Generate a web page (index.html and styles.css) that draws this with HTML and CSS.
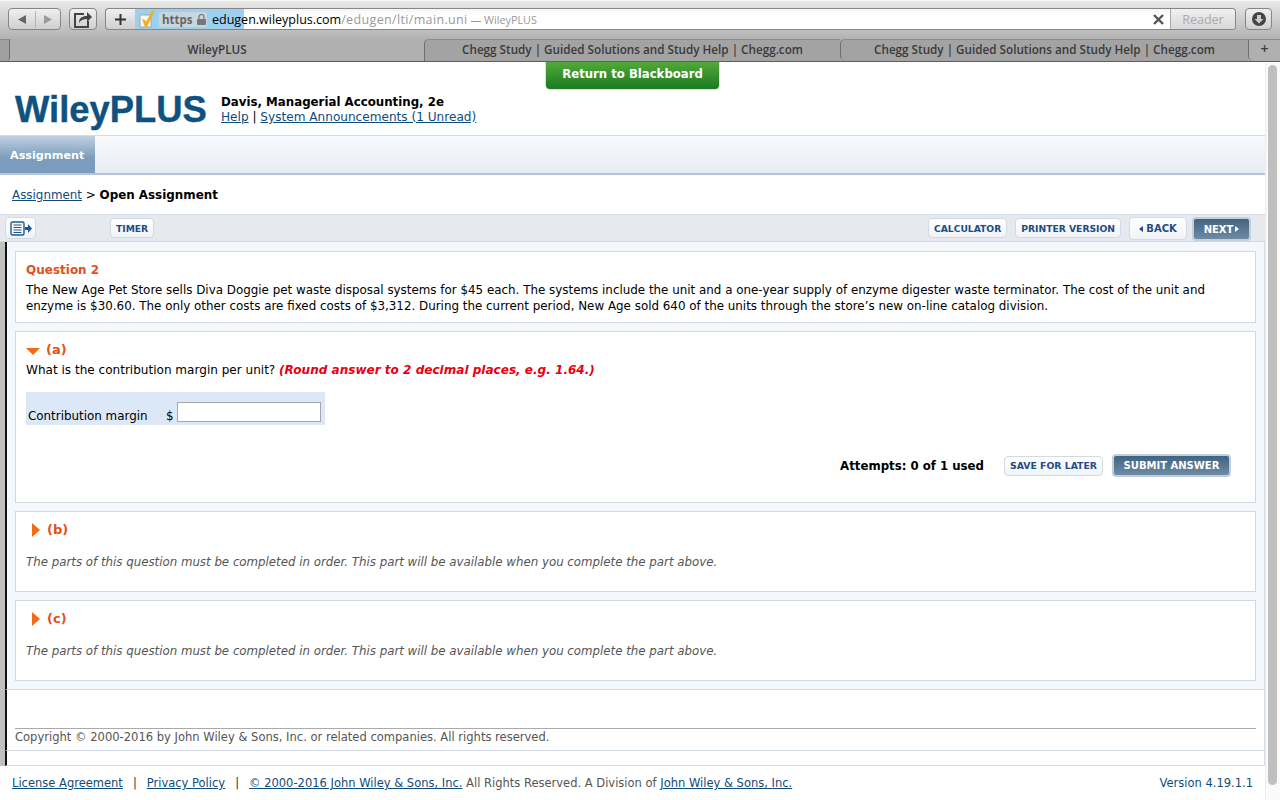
FILE: index.html
```html
<!DOCTYPE html>
<html lang="en">
<head>
  <meta charset="UTF-8">
  <title>WileyPLUS</title>
  <link rel="stylesheet" href="styles.css">
</head>
<body>
  <!-- Browser window chrome -->
  <div class="toolbar">
    <div class="tool-btn nav-btns">
      <svg width="51" height="19" viewBox="0 0 51 19"><path d="M17 5v9l-8-4.500z" fill="#666"/><path d="M26.500 1v17" stroke="#b4b4b4"/><path d="M35 5v9l8-4.500z" fill="#9a9a9a"/></svg>
    </div>
    <div class="tool-btn share-btn">
      <svg width="20" height="19" viewBox="0 0 20 19"><path d="M11 4H2v13h13v-6" fill="none" stroke="#444" stroke-width="2"/><path d="M6 13c0-5 3-7 8-7V2l5 5-5 5V9c-4 0-6 1-8 4z" fill="#444"/></svg>
    </div>
    <div class="tool-btn plus-btn">
      <svg width="13" height="13" viewBox="0 0 13 13"><path d="M6.500 1v11M1 6.500h11" stroke="#333" stroke-width="2"/></svg>
    </div>
    <div class="address">
      <svg class="favicon" width="16" height="18" viewBox="0 0 16 18"><path d="M1 5h11v12H1z" fill="#f6f6f0" stroke="#a8a8a0"/><path d="M3 9l3 1 1 2 6-11 3-1-8 17H6z" fill="#f6ad1c"/></svg>
      <span class="https">https
        <svg width="9" height="11" viewBox="0 0 9 11"><path d="M2 5V3a2.500 2.500 0 0 1 5 0v2" fill="none" stroke="#777" stroke-width="1.200"/><rect y="5" width="9" height="6" rx="1" fill="#777"/></svg>
      </span>
      <span class="url"><span class="host">edugen.wileyplus.com</span><span class="path">/edugen/lti/main.uni</span><span class="page-name"> — WileyPLUS</span></span>
      <span class="progress"></span>
      <svg class="stop" width="11" height="11" viewBox="0 0 11 11"><path d="M1 1l9 9M10 1l-9 9" stroke="#555" stroke-width="2.400"/></svg>
      <span class="reader">Reader</span>
    </div>
    <div class="tool-btn dl-btn">
      <svg width="14" height="14" viewBox="0 0 14 14"><circle cx="7" cy="7" r="7" fill="#444"/><path d="M5 3h4v4h2.500L7 11.500 2.500 7H5z" fill="#ccc"/></svg>
    </div>
  </div>
  <div class="tabs">
    <div class="tab-edge"></div>
    <div class="tab-active">WileyPLUS</div>
    <div class="tab tab-wide">Chegg Study | Guided Solutions and Study Help | Chegg.com</div>
    <div class="tab">Chegg Study | Guided Solutions and Study Help | Chegg.com</div>
    <div class="tab-add">+</div>
  </div>

  <div class="window">
    <div class="page">
      <a class="return-btn">Return to Blackboard</a>

      <div class="header">
        <div class="logo">WileyPLUS</div>
        <div class="course">
          <div class="course-title">Davis, Managerial Accounting, 2e</div>
          <div class="course-links"><a>Help</a> | <a>System Announcements (1 Unread)</a></div>
        </div>
      </div>

      <div class="nav"><div class="nav-tab">Assignment</div></div>

      <div class="crumbs"><a>Assignment</a> &gt; <b>Open Assignment</b></div>

      <div class="actions">
        <div class="btn icon-btn">
          <svg width="23" height="15" viewBox="0 0 23 15"><rect x="1" y="1" width="13" height="13" rx="1.500" fill="none" stroke="#1f5a8c" stroke-width="1.400"/><path d="M3.500 4h8M3.500 6.500h8M3.500 9h8M3.500 11.500h8" stroke="#1f5a8c"/><path d="M15 6h3V3l4 4.500-4 4.500V9h-3z" fill="#1f5a8c"/></svg>
        </div>
        <div class="btn timer">TIMER</div>
        <div class="spacer"></div>
        <div class="btn btn-small">CALCULATOR</div>
        <div class="btn btn-small">PRINTER VERSION</div>
        <div class="btn back"><span class="arrow-left"></span>BACK</div>
        <div class="btn btn-dark next">NEXT<span class="arrow-right"></span></div>
      </div>

      <div class="frame">
        <div class="main">
          <div class="card card-question">
            <div class="orange question-title">Question 2</div>
            <p>The New Age Pet Store sells Diva Doggie pet waste disposal systems for $45 each. The systems include the unit and a one-year supply of enzyme digester waste terminator. The cost of the unit and enzyme is $30.60. The only other costs are fixed costs of $3,312. During the current period, New Age sold 640 of the units through the store’s new on-line catalog division.</p>
          </div>

          <div class="card card-a">
            <div class="part-head orange"><span class="tri-down"></span>(a)</div>
            <p class="ask">What is the contribution margin per unit? <b class="hint">(Round answer to 2 decimal places, e.g. 1.64.)</b></p>
            <div class="answer-row">
              <span class="answer-label">Contribution margin</span>
              <span class="answer-unit">$</span>
              <input class="answer-input" type="text">
            </div>
            <div class="submit-row">
              <b class="attempts">Attempts: 0 of 1 used</b>
              <div class="btn save">SAVE FOR LATER</div>
              <div class="btn btn-dark submit">SUBMIT ANSWER</div>
            </div>
          </div>

          <div class="card card-locked">
            <div class="part-head orange"><span class="tri-right"></span>(b)</div>
            <p class="locked">The parts of this question must be completed in order. This part will be available when you complete the part above.</p>
          </div>

          <div class="card card-locked">
            <div class="part-head orange"><span class="tri-right"></span>(c)</div>
            <p class="locked">The parts of this question must be completed in order. This part will be available when you complete the part above.</p>
          </div>
        </div>

        <div class="copyright-wrap">
          <div class="copyright">Copyright © 2000-2016 by John Wiley &amp; Sons, Inc. or related companies. All rights reserved.</div>
        </div>
        <div class="gap-row"></div>
      </div>

      <div class="footer">
        <div><a>License Agreement</a><span class="sep">|</span><a>Privacy Policy</a><span class="sep">|</span><a>© 2000-2016 John Wiley &amp; Sons, Inc.</a> All Rights Reserved. A Division of <a>John Wiley &amp; Sons, Inc.</a></div>
        <div class="version">Version 4.19.1.1</div>
      </div>
    </div>
    <div class="scrollbar"><div class="thumb"></div></div>
  </div>
</body>
</html>
```

FILE: styles.css
```css
* {
  box-sizing: border-box;
}

html, body {
  height: 100%;
}

body {
  margin: 0;
  overflow: hidden;
  background: #fff;
  color: #000;
  font-family: "DejaVu Sans", Verdana, sans-serif;
  font-size: 12px;
}

a {
  color: #0f4c7c;
  text-decoration: underline;
}

p {
  margin: 0;
}

/* browser chrome */
.toolbar {
  height: 39px;
  padding: 7px 8px 0;
  display: flex;
  align-items: flex-start;
  background: linear-gradient(#e9e9e9, #b2b2b2);
  border-top: 1px solid #f5f5f5;
}

.tool-btn {
  height: 22px;
  display: flex;
  align-items: center;
  justify-content: center;
  border: 1px solid #868686;
  border-radius: 4px;
  background: linear-gradient(#f0f0f0, #cfcfcf);
}

.nav-btns {
  width: 53px;
  margin-right: 8px;
}

.share-btn {
  width: 28px;
  margin-right: 8px;
}

.plus-btn {
  width: 30px;
  border-radius: 4px 0 0 4px;
  border-right: 0;
}

.dl-btn {
  width: 27px;
  margin-left: 9px;
}

.address {
  flex: 1;
  height: 22px;
  display: flex;
  align-items: center;
  position: relative;
  border: 1px solid #868686;
  border-left: 0;
  border-radius: 0 4px 4px 0;
  background: linear-gradient(#f4f4f4, #fff 30%);
  font-family: "Open Sans", sans-serif;
  font-size: 12.500px;
}

.favicon {
  margin: 0 4px 0 4px;
  position: relative;
  z-index: 1;
}

.https {
  width: 48px;
  height: 15px;
  padding-left: 3px;
  display: flex;
  align-items: center;
  gap: 4px;
  position: relative;
  z-index: 1;
  background: #c8d6de;
  border-radius: 3px;
  color: #666;
  font-size: 11.500px;
  font-weight: 700;
}

.url {
  margin-left: 5px;
  position: relative;
  z-index: 1;
  white-space: nowrap;
}

.host {
  color: #000;
}

.path {
  color: #999;
  letter-spacing: 0.350px;
}

.page-name {
  color: #999;
  font-size: 10.800px;
}

.progress {
  position: absolute;
  left: 0;
  top: 0;
  bottom: 0;
  width: 109px;
  background: #9bd0ee;
}

.stop {
  margin-left: auto;
  margin-right: 6px;
}

.reader {
  width: 65px;
  height: 100%;
  display: flex;
  align-items: center;
  justify-content: center;
  border-left: 1px solid #aaa;
  background: linear-gradient(#f0f0f0, #d8d8d8);
  border-radius: 0 4px 4px 0;
  color: #aaa;
}

.tabs {
  height: 23px;
  display: flex;
  background: #ababab;
  border-bottom: 1px solid #5e5e5e;
  font-family: "Open Sans", sans-serif;
  font-size: 11.700px;
  font-weight: 600;
  line-height: 18px;
  color: #3a3a3a;
}

.tab-edge {
  width: 10px;
  background: #a0a0a0;
  border-top: 1px solid #8c8c8c;
  border-right: 1px solid #6e6e6e;
  border-radius: 0 0 4px 0;
}

.tab-active {
  width: 414px;
  text-align: center;
  padding-top: 1px;
  background: #b0b0b0;
}

.tab {
  width: 408px;
  text-align: center;
  background: #a3a3a3;
  border-top: 1px solid #8c8c8c;
  border-left: 1px solid #6e6e6e;
  border-radius: 5px 0 0 5px;
  white-space: nowrap;
}

.tab-wide {
  width: 416px;
  border-radius: 5px 0 0 0;
}

.tab-add {
  flex: 1;
  text-align: center;
  background: #b0b0b0;
  border-top: 1px solid #8c8c8c;
  border-left: 1px solid #6e6e6e;
  border-radius: 0 0 0 5px;
  font-size: 14px;
}

/* page */
.window {
  height: 738px;
  display: flex;
}

.page {
  flex: 1;
  position: relative;
  min-width: 0;
}

.scrollbar {
  width: 15px;
  padding: 3px 3px 0 2px;
  background: #fafafa;
  border-left: 1px solid #ececec;
}

.thumb {
  height: 720px;
  border-radius: 5px;
  background: #bfbfbf;
}

.return-btn {
  position: absolute;
  left: 545px;
  top: 0;
  width: 175px;
  height: 28px;
  padding-bottom: 3px;
  display: flex;
  align-items: center;
  justify-content: center;
  background: linear-gradient(#53a93a, #1a7a22);
  border: solid #d8e8d0;
  border-width: 0 1px 1px;
  border-radius: 0 0 5px 5px;
  color: #fff;
  font-size: 11.700px;
  font-weight: 700;
  text-decoration: none;
}

.header {
  height: 74px;
  padding: 27px 0 0 15px;
  display: flex;
  align-items: flex-start;
  border-bottom: 1px solid #d4dce6;
}

.logo {
  width: 206px;
  color: #10527f;
  font-family: "Liberation Sans", Arial, sans-serif;
  font-size: 36.400px;
  font-weight: 700;
  line-height: 42px;
  -webkit-text-stroke: 0.400px #10527f;
}

.course {
  font-size: 11.800px;
  line-height: 15px;
  padding-top: 6px;
}

.course-title {
  font-weight: 700;
}

.course-links {
  font-size: 12.100px;
}

.nav {
  height: 39px;
  background: linear-gradient(#f8fafc, #e6ecf3);
  border-bottom: 2px solid #b4c3d5;
}

.nav-tab {
  width: 95px;
  height: 37px;
  padding-top: 13px;
  padding-left: 10px;
  background: linear-gradient(#c0d0e0, #7b9cbd 60%);
  color: #fff;
  font-size: 11.200px;
  font-weight: 700;
}

.crumbs {
  height: 39px;
  padding: 13px 0 0 12px;
  font-size: 11.900px;
}

.actions {
  height: 28px;
  padding: 2px 14px 0 5px;
  display: flex;
  align-items: flex-start;
  gap: 8px;
  background: #e6eaef;
  border-top: 1px solid #d4dce6;
  border-bottom: 1px solid #d0d8e2;
}

.btn {
  height: 20px;
  padding: 0 5px;
  display: flex;
  align-items: center;
  justify-content: center;
  border: 1px solid #d2dae4;
  border-radius: 4px;
  background: linear-gradient(#fff, #f0f3f7);
  color: #1f4c86;
  font-size: 9.200px;
  font-weight: 700;
  white-space: nowrap;
}

.spacer {
  flex: 1;
}

.icon-btn {
  width: 31px;
  height: 22px;
  padding: 0 0 0 2px;
}

.timer {
  margin-left: 66px;
  margin-top: 1px;
}

.btn-small {
  margin-top: 1px;
}

.back,
.next {
  height: 23px;
  padding: 0;
  font-size: 10px;
}

.back {
  width: 58px;
}

.next {
  width: 59px;
  height: 24px;
  margin-left: -3px;
}

.btn-dark {
  background: linear-gradient(#3f6482, #6f8ba3);
  border: 2px solid #c2cfdb;
  color: #fff;
}

.arrow-left,
.arrow-right {
  width: 0;
  height: 0;
  border-top: 3.500px solid transparent;
  border-bottom: 3.500px solid transparent;
}

.arrow-left {
  margin-right: 3px;
  border-right: 4px solid #1f4c86;
}

.arrow-right {
  margin-left: 2px;
  border-left: 4px solid #fff;
}

/* question area with the dark rule down the left side */
.frame {
  border-left: 5px solid #c0c0c0;
}

.main,
.copyright-wrap,
.gap-row {
  border-left: 2px solid #111;
  border-right: 1px solid #d4dce6;
  border-bottom: 1px solid #d0d8e2;
}

.main {
  height: 448px;
  padding: 9px 8px 0 8px;
  display: flex;
  flex-direction: column;
  gap: 8px;
  background: #f4f7fb;
  font-size: 11.900px;
  line-height: 16px;
}

.card {
  padding: 10px 10px 0;
  background: #fff;
  border: 1px solid #d0d8e2;
}

.card-question {
  height: 72px;
}

.card-a {
  height: 172px;
}

.card-locked {
  height: 81px;
}

.orange {
  color: #e2511a;
  font-size: 12px;
  font-weight: 700;
}

.question-title {
  margin-bottom: 4px;
}

.part-head {
  display: flex;
  align-items: center;
  gap: 6px;
  font-size: 13px;
}

.card-a .part-head {
  margin-bottom: 4px;
}

.card-locked .part-head {
  height: 16px;
  margin-bottom: 16px;
  padding-left: 6px;
  gap: 7px;
}

.tri-down {
  width: 0;
  height: 0;
  margin-top: 2px;
  border-left: 7.500px solid transparent;
  border-right: 7.500px solid transparent;
  border-top: 7px solid #f26a12;
}

.tri-right {
  width: 0;
  height: 0;
  border-top: 7.500px solid transparent;
  border-bottom: 7.500px solid transparent;
  border-left: 8px solid #f26a12;
}

.ask {
  font-size: 12.050px;
}

.hint {
  color: #e8000f;
  font-style: italic;
}

.answer-row {
  width: 299px;
  height: 33px;
  margin-top: 14px;
  padding: 10px 0 0 2px;
  display: flex;
  align-items: flex-start;
  background: #dce7f7;
}

.answer-label {
  width: 138px;
  margin-top: 6px;
}

.answer-unit {
  margin-top: 6px;
}

.answer-input {
  width: 144px;
  height: 20px;
  margin: 0 0 0 3px;
  border: 1px solid #a8a8a8;
  background: #fff;
}

.submit-row {
  margin-top: 29px;
  padding-right: 14px;
  display: flex;
  align-items: center;
  justify-content: flex-end;
}

.attempts {
  font-size: 11.750px;
}

.save {
  margin-left: 20px;
  padding: 0;
  width: 99px;
  font-size: 9.300px;
}

.submit {
  margin-left: 9px;
  height: 23px;
  width: 119px;
  font-size: 10px;
}

.locked {
  color: #555;
  font-size: 11.800px;
  font-style: italic;
}

.copyright-wrap {
  height: 61px;
  padding: 38px 8px 0 8px;
}

.copyright {
  border-top: 1px solid #aaa;
  color: #555;
  font-size: 11.540px;
  line-height: 14px;
  padding-top: 1px;
}

.gap-row {
  height: 15px;
}

.footer {
  height: 34px;
  padding: 10px 12px 0;
  display: flex;
  justify-content: space-between;
  color: #555;
  font-size: 11.500px;
}

.sep {
  margin: 0 10px;
  color: #333;
}

.version {
  color: #0f4c7c;
}
```
